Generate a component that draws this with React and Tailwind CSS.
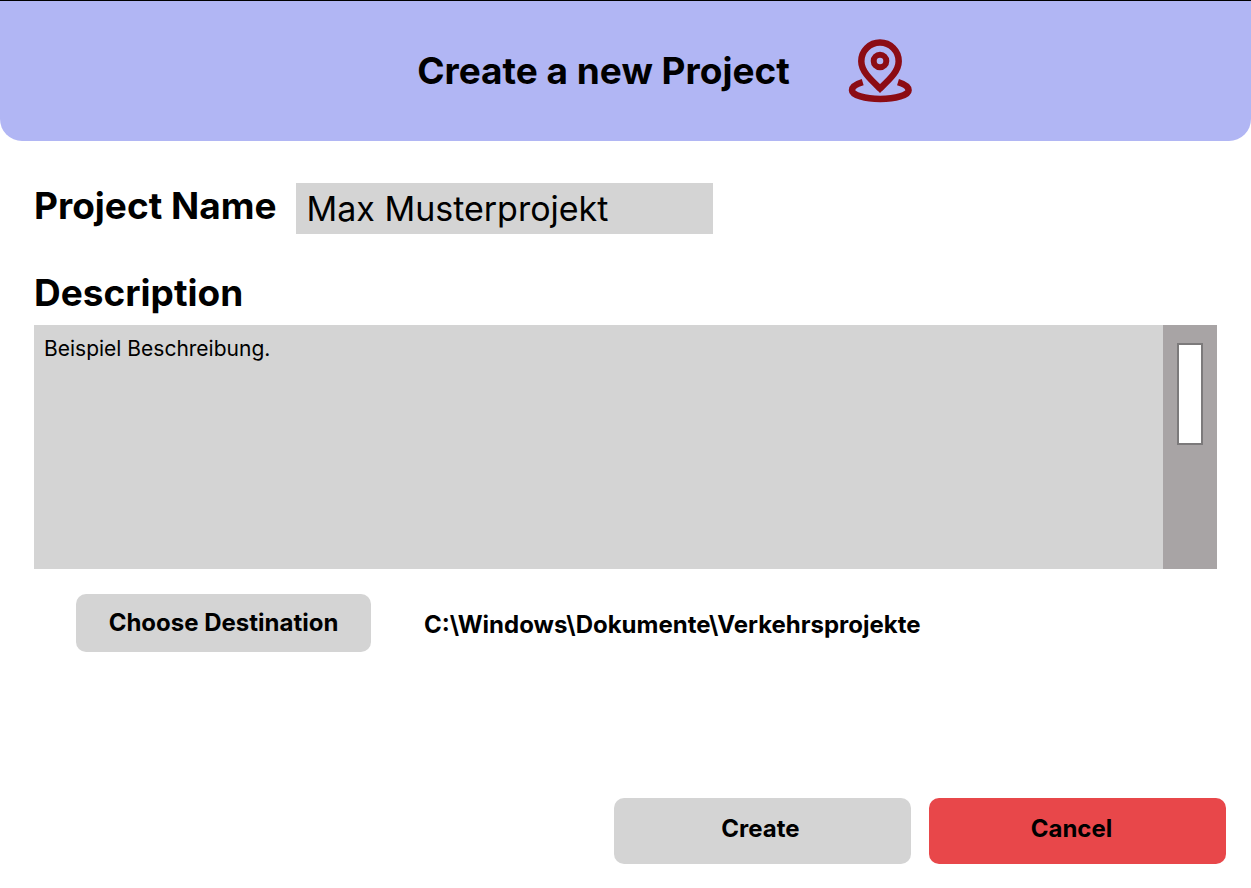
const PinIcon = () => (
  <svg viewBox="0 0 64 64" className="size-16 shrink-0" fill="none" stroke="#8c0c14" strokeWidth="6.5" aria-hidden="true">
    <path d="M32 49.5 C22 40 13.3 32 13.3 22.2 A18.7 18.7 0 0 1 50.7 22.2 C50.7 32 42 40 32 49.5 Z" />
    <circle cx="32" cy="22" r="6.3" strokeWidth="6" />
    <path d="M14.7 43.2 C8 45.2 4 48 4 51.2 C4 56.2 17 60 32.3 60 C47.6 60 60.6 56.2 60.6 51.2 C60.6 48 56.6 45.2 50 43.2" />
  </svg>
);

export default function App() {
  return (
    <main className="flex min-h-screen flex-col bg-white font-['Inter',sans-serif] text-black">
      <header className="flex h-[141px] items-center justify-center gap-[58px] rounded-b-[22px] border-t border-black bg-[#b1b6f4] pl-[78px]">
        <h1 className="text-[37px] leading-10 font-bold">Create a new Project</h1>
        <PinIcon />
      </header>
      <form className="flex grow flex-col pt-[42px] pb-6" onSubmit={(e) => e.preventDefault()}>
        <div className="flex items-center gap-5 px-[34px]">
          <label htmlFor="name" className="shrink-0 pb-1.5 text-[37px] leading-10 font-bold">Project Name</label>
          <input id="name" defaultValue="Max Musterprojekt" className="h-[51px] w-[417px] bg-[#d4d4d4] px-[10px] text-[34px] outline-none" />
        </div>
        <div className="flex flex-col px-[34px] pt-[39px]">
          <label htmlFor="description" className="pb-3 text-[37px] leading-10 font-bold">Description</label>
          <div className="flex h-[244px]">
            <textarea id="description" defaultValue="Beispiel Beschreibung." className="grow resize-none bg-[#d4d4d4] px-[10px] py-2 text-[21px] leading-8 outline-none" />
            <div className="flex w-[54px] justify-center bg-[#a8a4a5] pt-[18px]">
              <div className="h-[102px] w-[26px] border-2 border-[#7c7a7b] bg-white" />
            </div>
          </div>
        </div>
        <div className="flex items-center gap-[53px] px-[76px] pt-[25px]">
          <button type="button" className="h-[58px] w-[295px] rounded-[10px] bg-[#d4d4d4] text-2xl font-bold">Choose Destination</button>
          <output className="pt-1 text-2xl font-bold">C:\Windows\Dokumente\Verkehrsprojekte</output>
        </div>
        <div className="mt-auto flex justify-end gap-[18px] px-[25px]">
          <button type="submit" className="h-[66px] w-[297px] rounded-[10px] bg-[#d4d4d4] pr-1 pb-1 text-2xl font-bold">Create</button>
          <button type="button" className="h-[66px] w-[297px] rounded-[10px] bg-[#e8474a] pr-3 pb-1 text-2xl font-bold">Cancel</button>
        </div>
      </form>
    </main>
  );
}
